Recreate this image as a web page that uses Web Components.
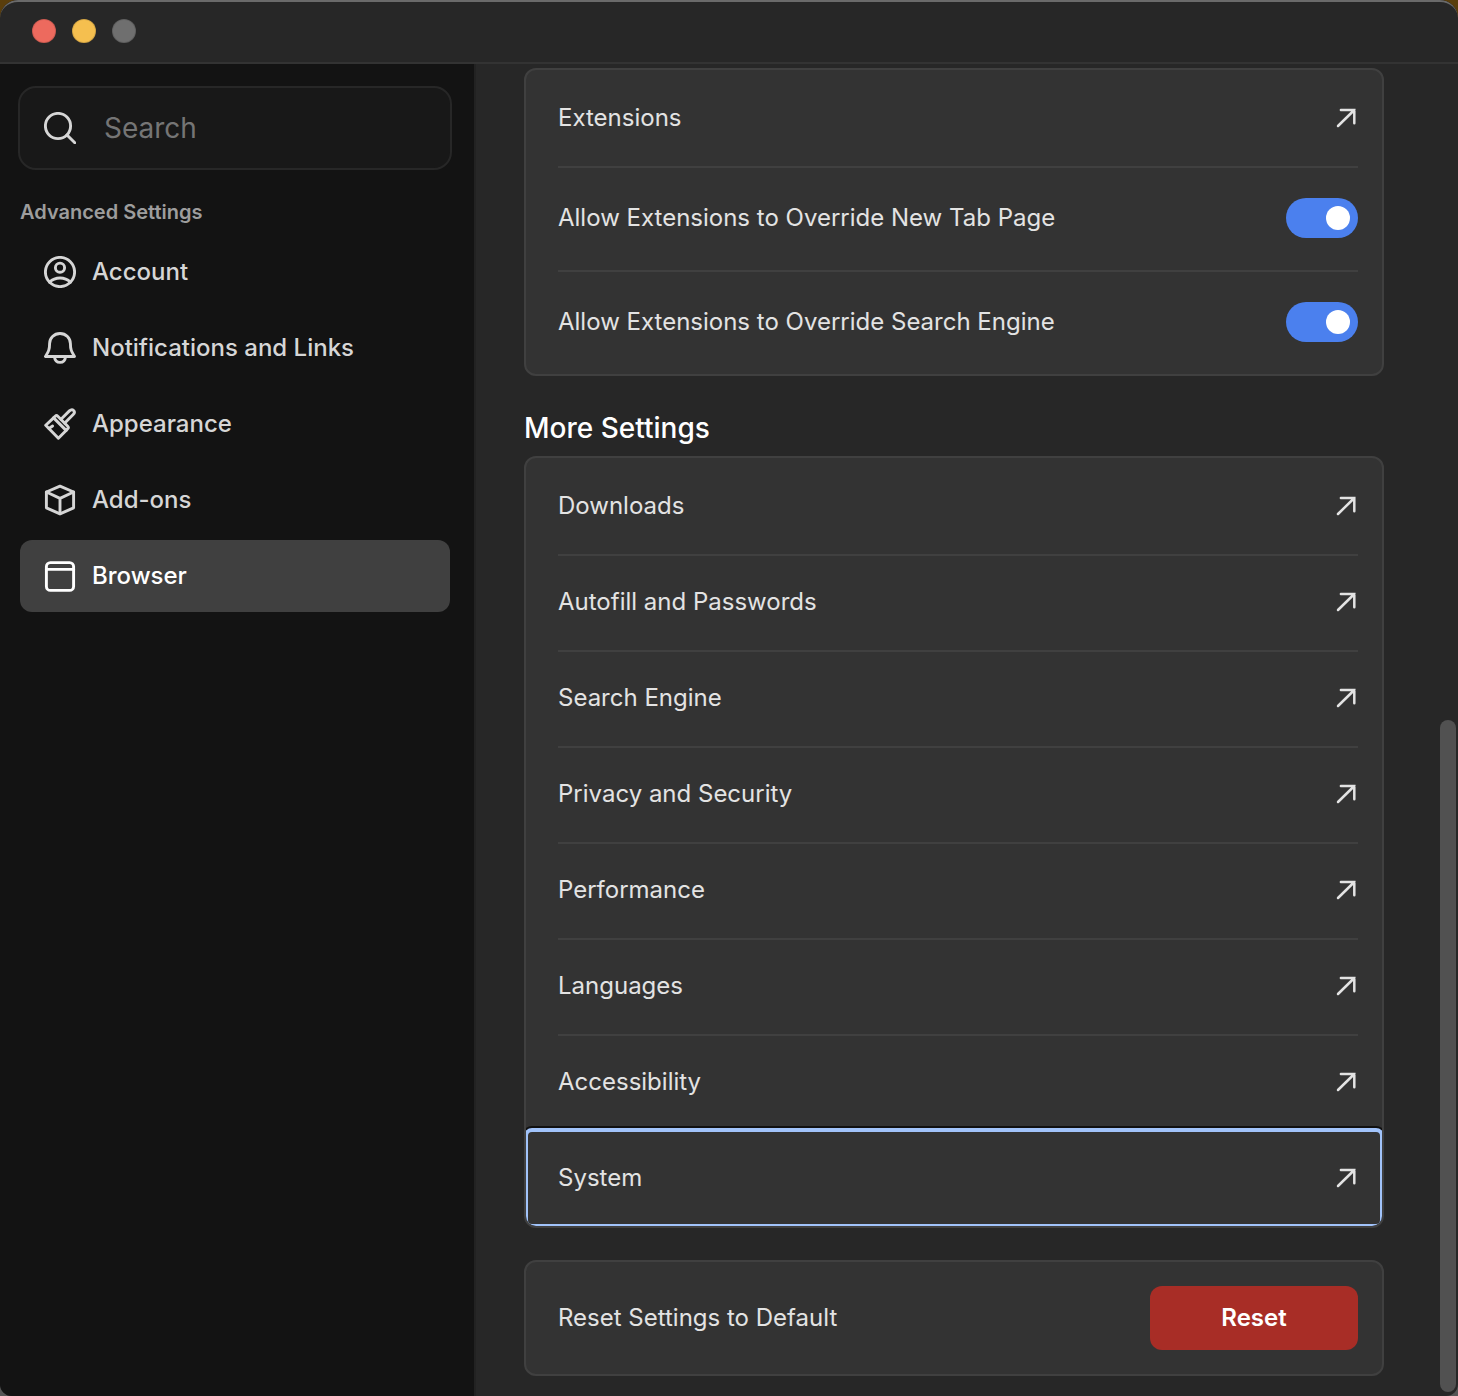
<!DOCTYPE html>
<html lang="en">
<head>
<meta charset="utf-8">
<title>Settings</title>
<style>
    :root {
        --bar: #272727;
        --sidebar: #131313;
        --card: #333333;
        --line: #404040;
        --text: #e3e3e3;
        --accent: #4b80ee;
        --focus: #a1c3fa;
        --danger: #a82d26;
    }
    html {
        background: linear-gradient(#5a3e0c 50%, #555 50%);
    }
    body {
        margin: 0;
        height: 100vh;
        overflow: hidden;
        color: var(--text);
        font: 24px/32px Inter, "Liberation Sans", sans-serif;
    }
</style>
</head>
<body>
<settings-window>
    <settings-sidebar slot="sidebar">
        <nav-item icon="account">Account</nav-item>
        <nav-item icon="bell">Notifications and Links</nav-item>
        <nav-item icon="brush">Appearance</nav-item>
        <nav-item icon="cube">Add-ons</nav-item>
        <nav-item icon="browser" active>Browser</nav-item>
    </settings-sidebar>

    <settings-card>
        <link-row>Extensions</link-row>
        <toggle-row>Allow Extensions to Override New Tab Page</toggle-row>
        <toggle-row>Allow Extensions to Override Search Engine</toggle-row>
    </settings-card>

    <settings-card heading="More Settings">
        <link-row>Downloads</link-row>
        <link-row>Autofill and Passwords</link-row>
        <link-row>Search Engine</link-row>
        <link-row>Privacy and Security</link-row>
        <link-row>Performance</link-row>
        <link-row>Languages</link-row>
        <link-row>Accessibility</link-row>
        <link-row focused>System</link-row>
    </settings-card>

    <settings-card>
        <reset-row>Reset Settings to Default</reset-row>
    </settings-card>
</settings-window>

<script>
const ICONS = {
    search: '<circle cx="14" cy="14" r="12.6"/><path d="M23 23l7.8 7.8"/>',
    account: '<circle cx="16" cy="16" r="14.6"/><circle cx="16" cy="11.7" r="4.6"/><path d="M5.6 26.2C8.4 23.4 12 22 16 22s7.6 1.4 10.4 4.2"/>',
    bell: '<path d="M16 1.5C10 1.5 5.6 6 5.6 11.5C5.6 17.5 4.6 19.5 1.5 24.5H30.5C27.4 19.5 26.4 17.5 26.4 11.5C26.4 6 22 1.5 16 1.5Z"/><path d="M10.4 24.6C10.8 28 13 30.4 16 30.4S21.2 28 21.6 24.6"/>',
    brush: '<path d="M9.6 9.9L11.2 8.3Q12.5 7 13.8 8.3L23.7 18.2Q25 19.5 23.7 20.8L22.1 22.4Z"/><path d="M9.6 9.9L1.7 17.2L14.4 30.2L22.1 22.4"/><path d="M17 11.3L25.4 2.9C28.6-.1 32.1 3.6 29.2 6.5L20.8 15.1"/><path d="M5 20.4L8.6 18"/>',
    cube: '<path d="M16 2.2L29.6 8V23.8L16 29.8L2.4 23.8V8Z"/><path d="M2.4 8L16 14.4L29.6 8M16 14.4V29.8"/>',
    browser: '<rect x="2.4" y="2.6" width="27.2" height="27.8" rx="4"/><path d="M2.4 9.4H29.6"/>'
};

const icon = (name) => `
    <svg class="icon" width="32" height="32" viewBox="0 0 32 32" fill="none" stroke="currentColor"
        stroke-width="2.9" stroke-linecap="round" stroke-linejoin="round" aria-hidden="true">${ICONS[name]}</svg>
`;

class BaseElement extends HTMLElement {
    constructor() {
        super();
        this.attachShadow({ mode: 'open' });
    }

    connectedCallback() {
        this.shadowRoot.innerHTML = `
            <style>
                *, *::before, :host { box-sizing: border-box; }
                :host { display: block; }
                .icon { flex: none; display: block; }
                ${this._createStyle()}
            </style>
            ${this._createContent()}
        `;
    }
}

class SettingsWindow extends BaseElement {
    _createStyle() {
        return `
            :host {
                display: flex;
                flex-direction: column;
                height: 100%;
                background: var(--bar);
                border-radius: 18px 18px 12px 12px;
                overflow: hidden;
            }
            header {
                display: flex;
                flex: none;
                gap: 16px;
                height: 64px;
                padding: 17px 32px 0;
                border-top: 2px solid #6a6a6a;
                border-bottom: 2px solid #333;
                border-radius: 18px 18px 0 0;
            }
            header button {
                width: 24px;
                height: 24px;
                padding: 0;
                border: 1px solid #0002;
                border-radius: 50%;
            }
            .close { background: #ed6a5e; }
            .minimize { background: #f5bf4f; }
            .zoom { background: #6f6f6f; }
            .body {
                display: flex;
                flex: 1;
                min-height: 0;
            }
            main {
                flex: 1;
                min-width: 0;
                padding: 4px 56px 20px 48px;
            }
            .track {
                display: flex;
                flex-direction: column;
                width: 16px;
                margin: 0 2px 4px 0;
            }
            .track::before {
                content: "";
                flex: 41;
            }
            .thumb {
                flex: 42;
                border-radius: 8px;
                background: #515151;
            }
        `;
    }

    _createContent() {
        return `
            <header>
                <button class="close" aria-label="Close"></button>
                <button class="minimize" aria-label="Minimize"></button>
                <button class="zoom" aria-label="Zoom" disabled></button>
            </header>
            <div class="body">
                <slot name="sidebar"></slot>
                <main><slot></slot></main>
                <div class="track"><div class="thumb"></div></div>
            </div>
        `;
    }
}

class SettingsSidebar extends BaseElement {
    _createStyle() {
        return `
            :host {
                flex: none;
                width: 476px;
                padding: 22px 22px 0 18px;
                border-right: 2px solid #222;
                background: var(--sidebar);
            }
            .search {
                display: flex;
                align-items: center;
                gap: 28px;
                height: 84px;
                padding: 0 24px;
                border: 2px solid #272727;
                border-radius: 18px;
                background: #181818;
                color: #d6d6d6;
            }
            input {
                flex: 1;
                min-width: 0;
                padding: 0;
                border: 0;
                outline: 0;
                background: none;
                color: inherit;
                font: inherit;
                font-size: 28px;
            }
            input::placeholder { color: #757575; }
            h2 {
                margin: 30px 2px 12px;
                color: #9d9d9d;
                font-size: 20px;
                font-weight: 600;
                line-height: 24px;
            }
            nav {
                display: flex;
                flex-direction: column;
                gap: 4px;
                padding: 0 2px;
            }
        `;
    }

    _createContent() {
        return `
            <label class="search">
                ${icon('search')}
                <input type="text" placeholder="Search" aria-label="Search">
            </label>
            <h2>Advanced Settings</h2>
            <nav><slot></slot></nav>
        `;
    }
}

class NavItem extends BaseElement {
    _createStyle() {
        return `
            a {
                display: flex;
                align-items: center;
                gap: 16px;
                height: 72px;
                padding: 0 24px;
                border-radius: 12px;
                color: #d6d6d6;
                font-weight: 500;
                text-decoration: none;
            }
            :host([active]) a {
                background: #404040;
                color: #fff;
            }
        `;
    }

    _createContent() {
        return `<a href="#">${icon(this.getAttribute('icon'))}<slot></slot></a>`;
    }
}

class SettingsCard extends BaseElement {
    _createStyle() {
        return `
            :host { margin-bottom: 32px; }
            h2 {
                margin: 0 0 8px;
                color: #fff;
                font-size: 28px;
                font-weight: 500;
                line-height: 40px;
            }
            .card {
                border: 2px solid var(--line);
                border-radius: 12px;
                background: var(--card);
                overflow: hidden;
            }
        `;
    }

    _createContent() {
        const heading = this.getAttribute('heading');
        return `
            ${heading ? `<h2>${heading}</h2>` : ''}
            <div class="card"><slot></slot></div>
        `;
    }
}

// Shared by every row in a card; the divider sits on the row's top edge.
const ROW_STYLE = `
    :host { position: relative; }
    :host(:not(:first-child))::before {
        content: "";
        position: absolute;
        top: 0;
        left: 32px;
        right: 24px;
        height: 2px;
        background: var(--line);
    }
    .row {
        display: flex;
        align-items: center;
        justify-content: space-between;
        padding: 0 24px 0 32px;
        color: inherit;
        text-decoration: none;
    }
`;

class LinkRow extends BaseElement {
    _createStyle() {
        return `
            ${ROW_STYLE}
            .row { height: 96px; }
            :host([focused]) .row {
                position: relative;
                border-radius: 6px;
                background: var(--card);
                outline: 4px solid var(--focus);
                outline-offset: -2px;
                box-shadow: 0 0 0 4px #101010;
            }
        `;
    }

    _createContent() {
        return `
            <a class="row" href="#">
                <slot></slot>
                <svg class="icon" width="24" height="24" viewBox="0 0 24 24" fill="none" stroke="currentColor"
                    stroke-width="2.5" stroke-linecap="round" aria-hidden="true">
                    <path d="M4 20L20.3 4M6.9 4H20.3V17.3"/>
                </svg>
            </a>
        `;
    }
}

class ToggleRow extends BaseElement {
    _createStyle() {
        return `
            ${ROW_STYLE}
            .row { height: 104px; }
            input {
                appearance: none;
                display: flex;
                align-items: center;
                width: 72px;
                height: 40px;
                margin: 0;
                padding: 0 8px;
                border-radius: 20px;
                background: #5a5a5a;
            }
            input::before {
                content: "";
                width: 24px;
                height: 24px;
                border-radius: 50%;
                background: #fff;
            }
            input:checked {
                justify-content: flex-end;
                background: var(--accent);
            }
        `;
    }

    _createContent() {
        return `
            <label class="row">
                <slot></slot>
                <input type="checkbox" role="switch" checked>
            </label>
        `;
    }
}

class ResetRow extends BaseElement {
    _createStyle() {
        return `
            ${ROW_STYLE}
            .row { height: 112px; }
            button {
                width: 208px;
                height: 64px;
                border: 0;
                border-radius: 12px;
                background: var(--danger);
                color: #fff;
                font: inherit;
                font-weight: 600;
            }
        `;
    }

    _createContent() {
        return `
            <div class="row">
                <slot></slot>
                <button>Reset</button>
            </div>
        `;
    }
}

customElements.define('settings-window', SettingsWindow);
customElements.define('settings-sidebar', SettingsSidebar);
customElements.define('nav-item', NavItem);
customElements.define('settings-card', SettingsCard);
customElements.define('link-row', LinkRow);
customElements.define('toggle-row', ToggleRow);
customElements.define('reset-row', ResetRow);
</script>
</body>
</html>
